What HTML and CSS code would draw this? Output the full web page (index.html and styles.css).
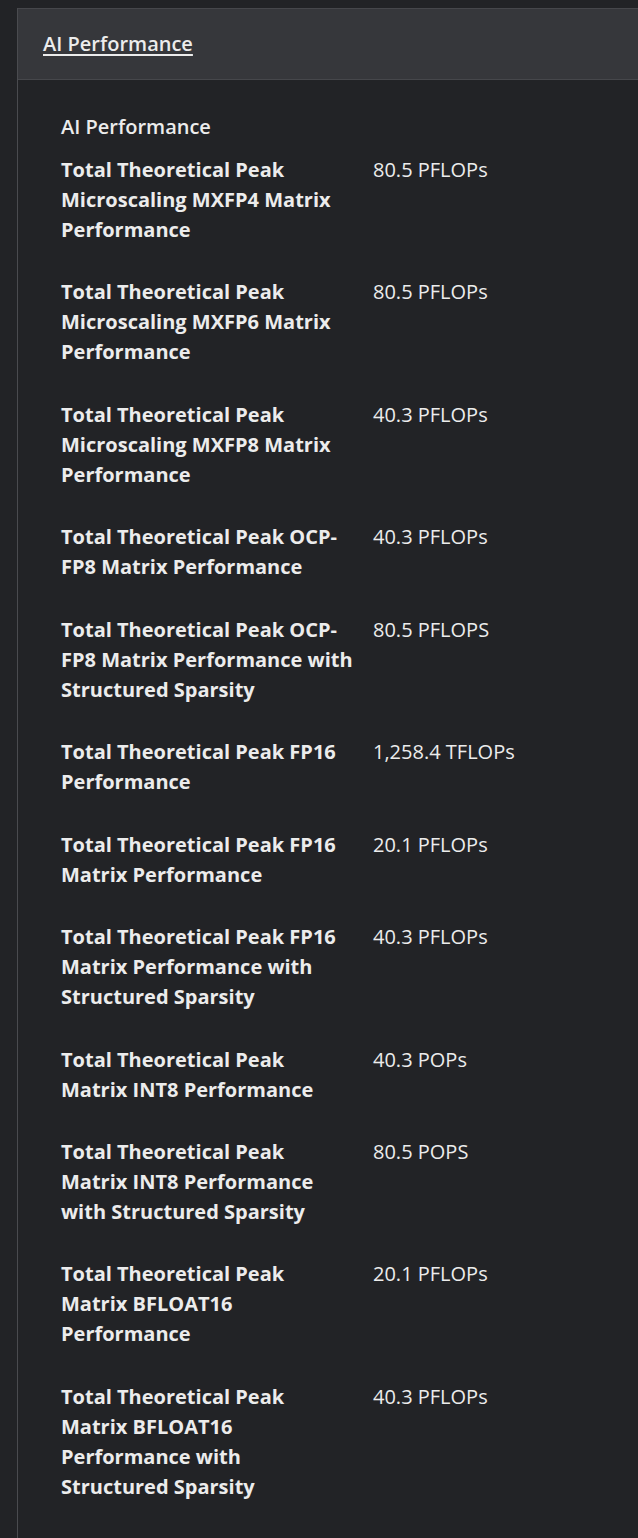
FILE: index.html
```html
<!DOCTYPE html>
<html lang="en">
<head>
<meta charset="utf-8">
<title>AI Performance</title>
<link rel="stylesheet" href="styles.css">
</head>
<body>
<div class="frame">
  <div class="panel">
    <div class="panel-head"><a class="panel-link" href="#">AI Performance</a></div>
    <div class="panel-body">
      <div class="group-title">AI Performance</div>
      <div class="specs">
        <div class="spec"><div class="label">Total Theoretical Peak Microscaling MXFP4 Matrix Performance</div><div class="value">80.5 PFLOPs</div></div>
        <div class="spec"><div class="label">Total Theoretical Peak Microscaling MXFP6 Matrix Performance</div><div class="value">80.5 PFLOPs</div></div>
        <div class="spec"><div class="label">Total Theoretical Peak Microscaling MXFP8 Matrix Performance</div><div class="value">40.3 PFLOPs</div></div>
        <div class="spec"><div class="label">Total Theoretical Peak OCP-FP8 Matrix Performance</div><div class="value">40.3 PFLOPs</div></div>
        <div class="spec"><div class="label">Total Theoretical Peak OCP-FP8 Matrix Performance with Structured Sparsity</div><div class="value">80.5 PFLOPS</div></div>
        <div class="spec"><div class="label">Total Theoretical Peak FP16 Performance</div><div class="value">1,258.4 TFLOPs</div></div>
        <div class="spec"><div class="label">Total Theoretical Peak FP16 Matrix Performance</div><div class="value">20.1 PFLOPs</div></div>
        <div class="spec"><div class="label">Total Theoretical Peak FP16 Matrix Performance with Structured Sparsity</div><div class="value">40.3 PFLOPs</div></div>
        <div class="spec"><div class="label">Total Theoretical Peak Matrix INT8 Performance</div><div class="value">40.3 POPs</div></div>
        <div class="spec"><div class="label">Total Theoretical Peak Matrix INT8 Performance with Structured Sparsity</div><div class="value">80.5 POPS</div></div>
        <div class="spec"><div class="label">Total Theoretical Peak Matrix BFLOAT16 Performance</div><div class="value">20.1 PFLOPs</div></div>
        <div class="spec"><div class="label">Total Theoretical Peak Matrix BFLOAT16 Performance with Structured Sparsity</div><div class="value">40.3 PFLOPs</div></div>
      </div>
    </div>
  </div>
</div>
</body>
</html>
```
FILE: styles.css
```css
html, body {
  margin: 0;
  padding: 0;
  background: #222326;
}
body {
  font-family: "Open Sans", "Noto Sans", sans-serif;
  font-size: 20px;
  line-height: 30px;
  color: #ececec;
}
.frame {
  padding-top: 8px;
  padding-left: 17px;
  min-height: 1530px;
}
.panel {
  border-left: 1px solid #4a4b4f;
  min-height: 1530px;
}
.panel-head {
  background: #36373b;
  border-top: 1px solid #46474b;
  border-bottom: 1px solid #46474b;
  height: 70px;
  display: flex;
  align-items: center;
  padding-left: 25px;
}
.panel-link {
  color: #ececec;
  font-weight: 600;
  text-decoration: underline;
  text-underline-offset: 3px;
}
.panel-body {
  padding: 32px 0 0 43px;
}
.group-title {
  font-weight: 600;
  margin-bottom: 13px;
}
.spec {
  display: grid;
  grid-template-columns: 292px 1fr;
  column-gap: 20px;
  padding-bottom: 32.45px;
}
.label {
  font-weight: 700;
}
.value {
  font-weight: 400;
}
```
